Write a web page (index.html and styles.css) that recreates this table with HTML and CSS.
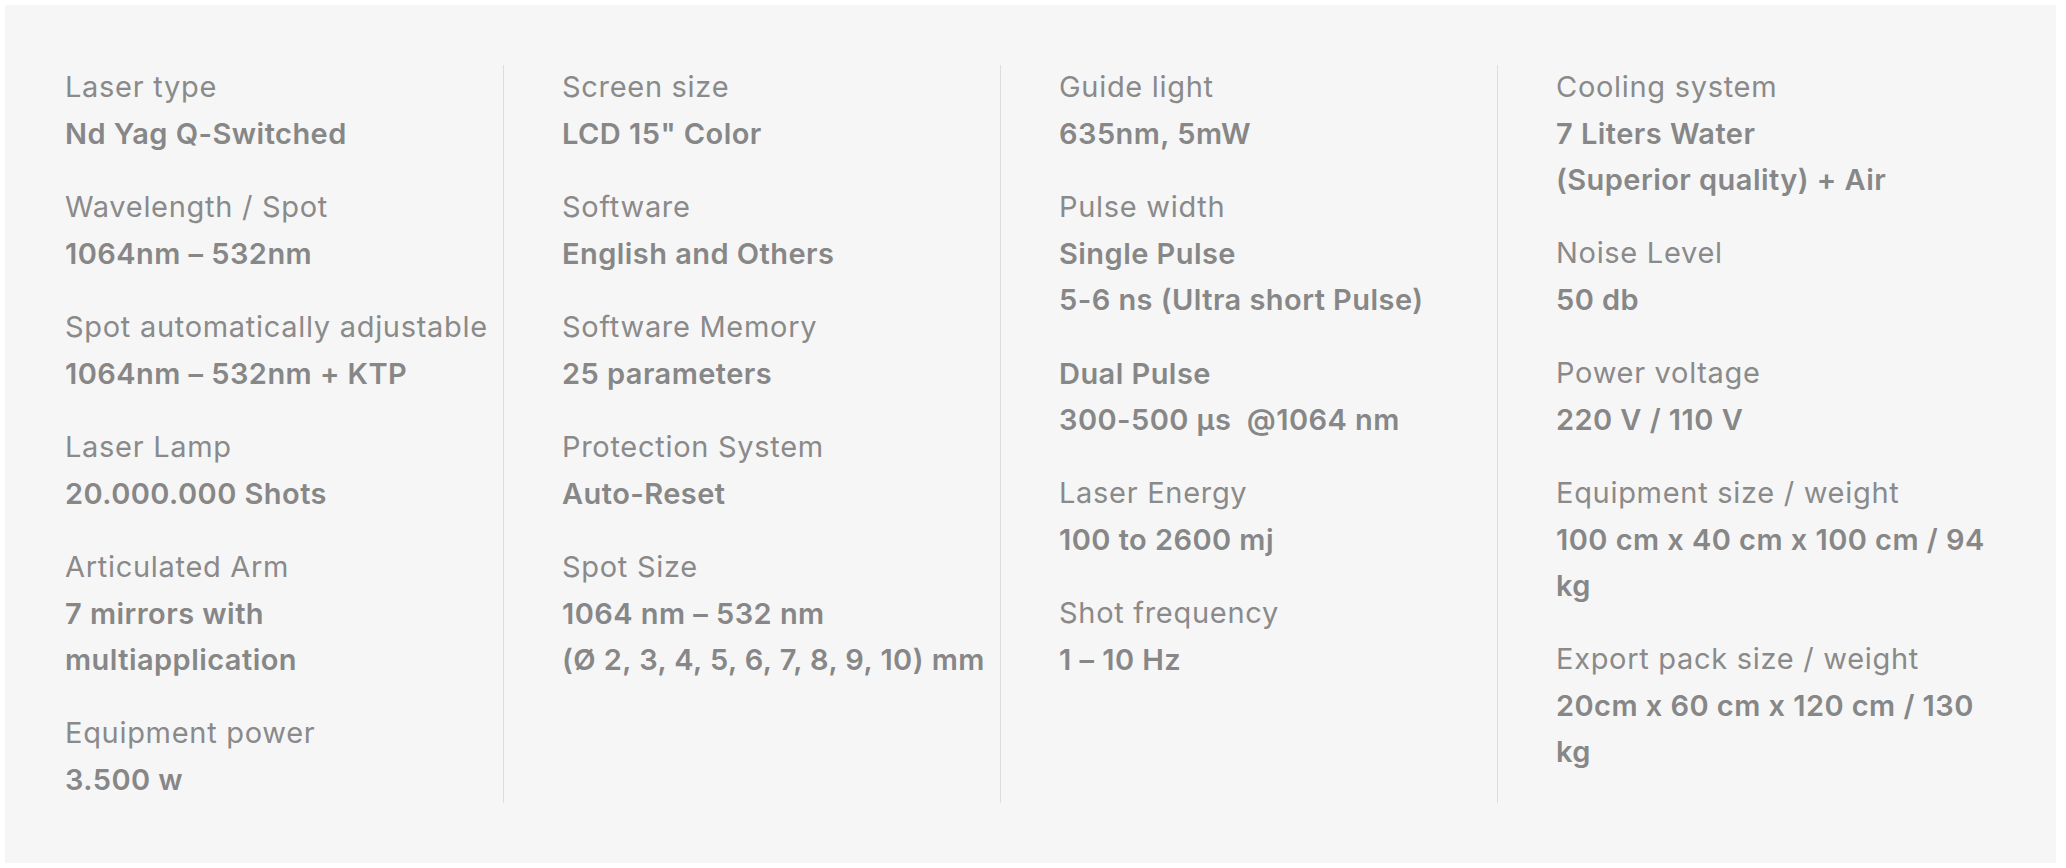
FILE: index.html
```html
<!DOCTYPE html>
<html lang="en">
<head>
<meta charset="utf-8">
<title>Specifications</title>
<link rel="stylesheet" href="styles.css">
</head>
<body>
<section class="specs">
  <div class="col">
    <div class="item"><div class="label">Laser type</div><div class="value">Nd Yag Q-Switched</div></div>
    <div class="item"><div class="label">Wavelength / Spot</div><div class="value">1064nm – 532nm</div></div>
    <div class="item"><div class="label">Spot automatically adjustable</div><div class="value">1064nm – 532nm + KTP</div></div>
    <div class="item"><div class="label">Laser Lamp</div><div class="value">20.000.000 Shots</div></div>
    <div class="item"><div class="label">Articulated Arm</div><div class="value">7 mirrors with<br>multiapplication</div></div>
    <div class="item"><div class="label">Equipment power</div><div class="value">3.500 w</div></div>
  </div>
  <div class="col">
    <div class="item"><div class="label">Screen size</div><div class="value">LCD 15" Color</div></div>
    <div class="item"><div class="label">Software</div><div class="value">English and Others</div></div>
    <div class="item"><div class="label">Software Memory</div><div class="value">25 parameters</div></div>
    <div class="item"><div class="label">Protection System</div><div class="value">Auto-Reset</div></div>
    <div class="item"><div class="label">Spot Size</div><div class="value">1064 nm – 532 nm<br>(Ø 2, 3, 4, 5, 6, 7, 8, 9, 10) mm</div></div>
  </div>
  <div class="col">
    <div class="item"><div class="label">Guide light</div><div class="value">635nm, 5mW</div></div>
    <div class="item"><div class="label">Pulse width</div><div class="value">Single Pulse<br>5-6 ns (Ultra short Pulse)</div></div>
    <div class="item"><div class="value">Dual Pulse<br>300-500 µs&nbsp; @1064 nm</div></div>
    <div class="item"><div class="label">Laser Energy</div><div class="value">100 to 2600 mj</div></div>
    <div class="item"><div class="label">Shot frequency</div><div class="value">1 – 10 Hz</div></div>
  </div>
  <div class="col">
    <div class="item"><div class="label">Cooling system</div><div class="value">7 Liters Water<br>(Superior quality) + Air</div></div>
    <div class="item"><div class="label">Noise Level</div><div class="value">50 db</div></div>
    <div class="item"><div class="label">Power voltage</div><div class="value">220 V / 110 V</div></div>
    <div class="item"><div class="label">Equipment size / weight</div><div class="value">100 cm x 40 cm x 100 cm / 94<br>kg</div></div>
    <div class="item"><div class="label">Export pack size / weight</div><div class="value">20cm x 60 cm x 120 cm / 130<br>kg</div></div>
  </div>
</section>
</body>
</html>
```

FILE: styles.css
```css
html, body {
  margin: 0;
  padding: 0;
  background: #ffffff;
}

body {
  padding: 5px 10px 5px 5px;
  font-family: Inter, "Open Sans", "DejaVu Sans", sans-serif;
  color: #8a8a8a;
}

.specs {
  height: 858px;
  box-sizing: border-box;
  background: #f6f6f6;
  padding: 60px 62px 60px 1px;
  display: grid;
  grid-template-columns: repeat(4, 1fr);
  align-items: stretch;
}

.col {
  border-left: 1px solid #dddddd;
  padding-left: 58px;
  display: flex;
  flex-direction: column;
  gap: 28px;
}

.col:first-child {
  border-left-color: transparent;
}

.label {
  font-size: 29px;
  line-height: 46px;
  font-weight: 400;
  letter-spacing: 0.7px;
  white-space: nowrap;
  margin-top: -1px;
  margin-bottom: 1px;
}

.value {
  font-size: 29px;
  line-height: 46px;
  font-weight: 600;
  letter-spacing: 0.45px;
  white-space: nowrap;
  color: #878787;
}
```
